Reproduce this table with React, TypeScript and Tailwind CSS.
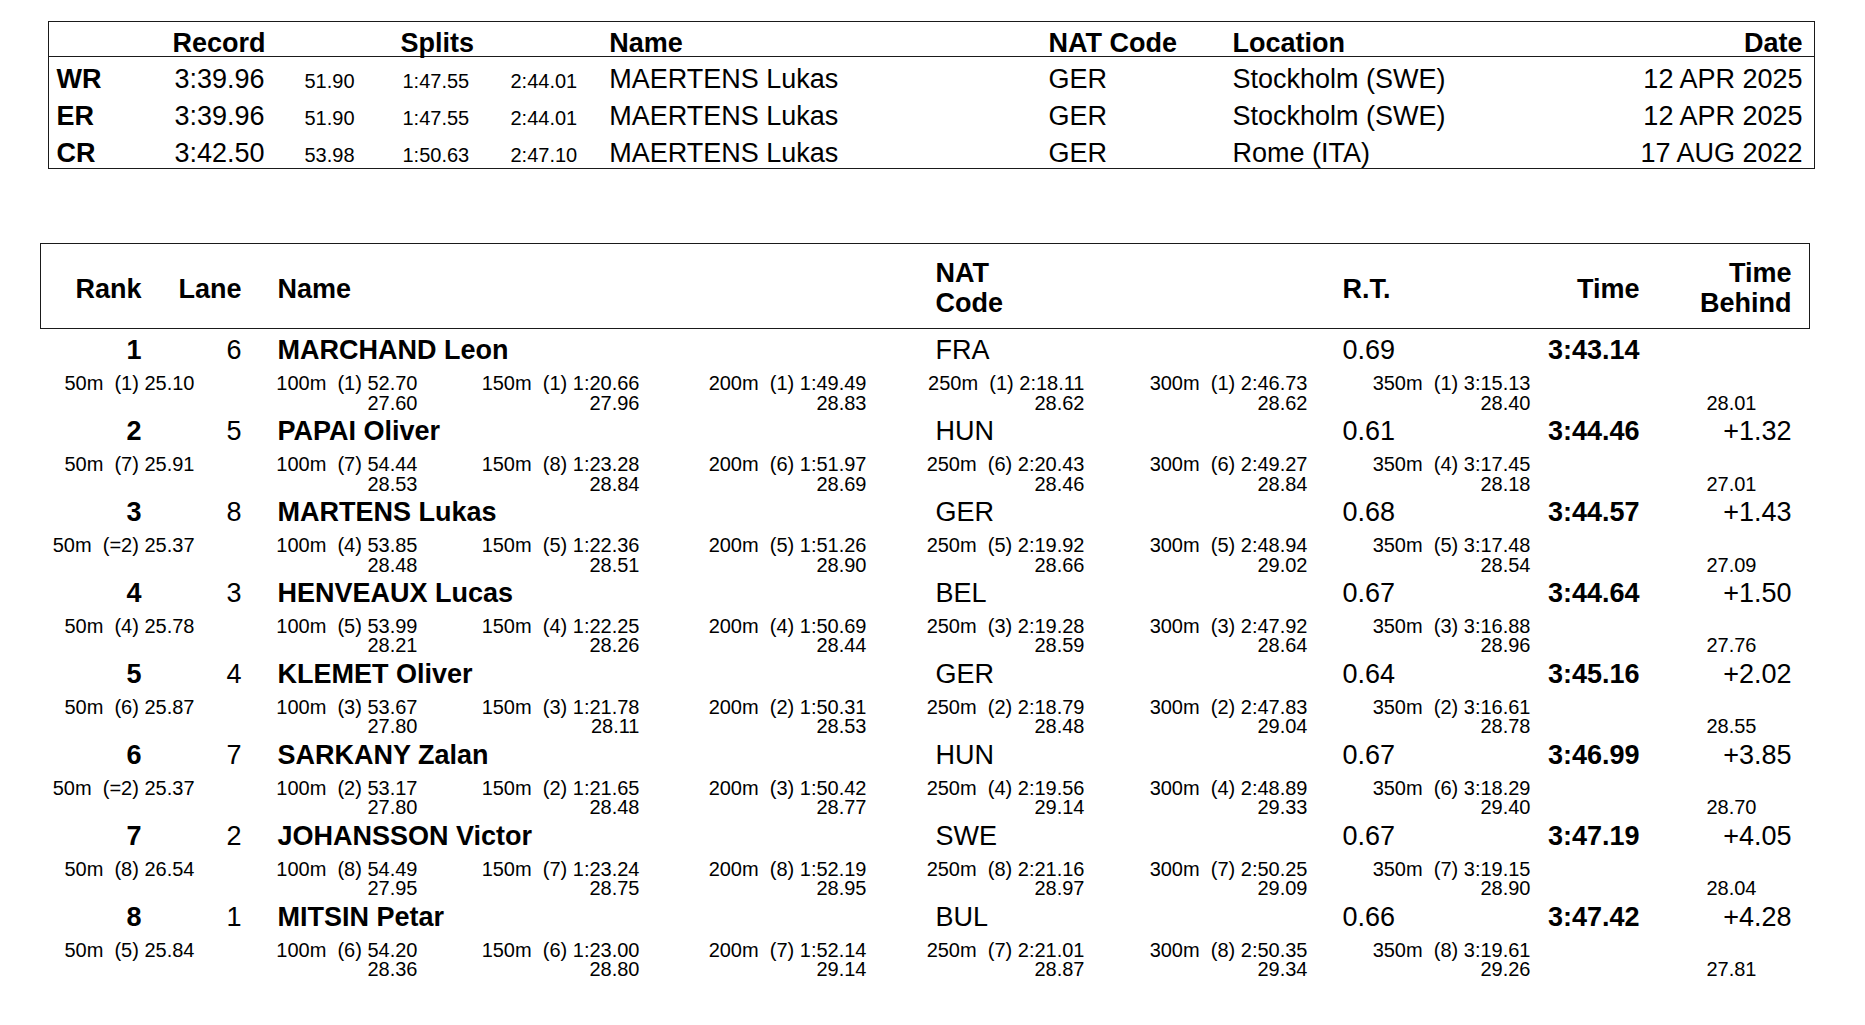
import React from "react";

type Rec = { code: string; time: string; s1: string; s2: string; s3: string; name: string; nat: string; loc: string; date: string };

const records: Rec[] = [
  { code: "WR", time: "3:39.96", s1: "51.90", s2: "1:47.55", s3: "2:44.01", name: "MAERTENS Lukas", nat: "GER", loc: "Stockholm (SWE)", date: "12 APR 2025" },
  { code: "ER", time: "3:39.96", s1: "51.90", s2: "1:47.55", s3: "2:44.01", name: "MAERTENS Lukas", nat: "GER", loc: "Stockholm (SWE)", date: "12 APR 2025" },
  { code: "CR", time: "3:42.50", s1: "53.98", s2: "1:50.63", s3: "2:47.10", name: "MAERTENS Lukas", nat: "GER", loc: "Rome (ITA)", date: "17 AUG 2022" },
];

type Split = [string, string];
type Row = {
  rank: string;
  lane: string;
  name: string;
  nat: string;
  rt: string;
  time: string;
  behind: string;
  splits: Split[];
  last: string;
};

const rows: Row[] = [
  {
    rank: "1", lane: "6", name: "MARCHAND Leon", nat: "FRA", rt: "0.69", time: "3:43.14", behind: "",
    splits: [["50m  (1) 25.10", ""], ["100m  (1) 52.70", "27.60"], ["150m  (1) 1:20.66", "27.96"], ["200m  (1) 1:49.49", "28.83"], ["250m  (1) 2:18.11", "28.62"], ["300m  (1) 2:46.73", "28.62"], ["350m  (1) 3:15.13", "28.40"]],
    last: "28.01",
  },
  {
    rank: "2", lane: "5", name: "PAPAI Oliver", nat: "HUN", rt: "0.61", time: "3:44.46", behind: "+1.32",
    splits: [["50m  (7) 25.91", ""], ["100m  (7) 54.44", "28.53"], ["150m  (8) 1:23.28", "28.84"], ["200m  (6) 1:51.97", "28.69"], ["250m  (6) 2:20.43", "28.46"], ["300m  (6) 2:49.27", "28.84"], ["350m  (4) 3:17.45", "28.18"]],
    last: "27.01",
  },
  {
    rank: "3", lane: "8", name: "MARTENS Lukas", nat: "GER", rt: "0.68", time: "3:44.57", behind: "+1.43",
    splits: [["50m  (=2) 25.37", ""], ["100m  (4) 53.85", "28.48"], ["150m  (5) 1:22.36", "28.51"], ["200m  (5) 1:51.26", "28.90"], ["250m  (5) 2:19.92", "28.66"], ["300m  (5) 2:48.94", "29.02"], ["350m  (5) 3:17.48", "28.54"]],
    last: "27.09",
  },
  {
    rank: "4", lane: "3", name: "HENVEAUX Lucas", nat: "BEL", rt: "0.67", time: "3:44.64", behind: "+1.50",
    splits: [["50m  (4) 25.78", ""], ["100m  (5) 53.99", "28.21"], ["150m  (4) 1:22.25", "28.26"], ["200m  (4) 1:50.69", "28.44"], ["250m  (3) 2:19.28", "28.59"], ["300m  (3) 2:47.92", "28.64"], ["350m  (3) 3:16.88", "28.96"]],
    last: "27.76",
  },
  {
    rank: "5", lane: "4", name: "KLEMET Oliver", nat: "GER", rt: "0.64", time: "3:45.16", behind: "+2.02",
    splits: [["50m  (6) 25.87", ""], ["100m  (3) 53.67", "27.80"], ["150m  (3) 1:21.78", "28.11"], ["200m  (2) 1:50.31", "28.53"], ["250m  (2) 2:18.79", "28.48"], ["300m  (2) 2:47.83", "29.04"], ["350m  (2) 3:16.61", "28.78"]],
    last: "28.55",
  },
  {
    rank: "6", lane: "7", name: "SARKANY Zalan", nat: "HUN", rt: "0.67", time: "3:46.99", behind: "+3.85",
    splits: [["50m  (=2) 25.37", ""], ["100m  (2) 53.17", "27.80"], ["150m  (2) 1:21.65", "28.48"], ["200m  (3) 1:50.42", "28.77"], ["250m  (4) 2:19.56", "29.14"], ["300m  (4) 2:48.89", "29.33"], ["350m  (6) 3:18.29", "29.40"]],
    last: "28.70",
  },
  {
    rank: "7", lane: "2", name: "JOHANSSON Victor", nat: "SWE", rt: "0.67", time: "3:47.19", behind: "+4.05",
    splits: [["50m  (8) 26.54", ""], ["100m  (8) 54.49", "27.95"], ["150m  (7) 1:23.24", "28.75"], ["200m  (8) 1:52.19", "28.95"], ["250m  (8) 2:21.16", "28.97"], ["300m  (7) 2:50.25", "29.09"], ["350m  (7) 3:19.15", "28.90"]],
    last: "28.04",
  },
  {
    rank: "8", lane: "1", name: "MITSIN Petar", nat: "BUL", rt: "0.66", time: "3:47.42", behind: "+4.28",
    splits: [["50m  (5) 25.84", ""], ["100m  (6) 54.20", "28.36"], ["150m  (6) 1:23.00", "28.80"], ["200m  (7) 1:52.14", "29.14"], ["250m  (7) 2:21.01", "28.87"], ["300m  (8) 2:50.35", "29.34"], ["350m  (8) 3:19.61", "29.26"]],
    last: "27.81",
  },
];

const topCols = "grid grid-cols-[116px_131px_97px_108px_100.7px_439.3px_184px_1fr_auto] items-baseline pl-[7.5px] pr-[11.5px]";
const mainCols = "grid grid-cols-[100.5px_100px_694px_407px_157px_140px_152px]";
const splitCols = "grid grid-cols-[153.5px_223px_222px_227px_218px_223px_223px_226px]";

export default function App() {
  return (
    <div className="w-[1865px] h-[1025px] overflow-hidden bg-white text-black font-['Liberation_Sans',Arial,Helvetica,sans-serif] pt-[21px]">
      {/* Records table */}
      <div className="ml-[48px] w-[1767px] border-[1.5px] border-[#1a1a1a]">
        <div className="h-[35.3px] pt-[5.6px] border-b-[1.5px] border-[#1a1a1a]">
          <div className={`${topCols} leading-[31.5px] text-[27px] font-bold`}>
            <div></div>
            <div>Record</div>
            <div></div>
            <div>Splits</div>
            <div></div>
            <div>Name</div>
            <div>NAT Code</div>
            <div>Location</div>
            <div className="text-right">Date</div>
          </div>
        </div>
        {records.map((r) => (
          <div key={r.code} className="h-[37px] pt-[5.6px]">
            <div className={`${topCols} leading-[32.7px] text-[27px]`}>
              <div className="font-bold">{r.code}</div>
              <div className="pl-[2px]">{r.time}</div>
              <div className="pl-[1px] text-[20px]">{r.s1}</div>
              <div className="pl-[2px] text-[20px]">{r.s2}</div>
              <div className="pl-[2px] text-[20px]">{r.s3}</div>
              <div>{r.name}</div>
              <div>{r.nat}</div>
              <div>{r.loc}</div>
              <div className="text-right">{r.date}</div>
            </div>
          </div>
        ))}
      </div>

      {/* Results table */}
      <div className="ml-[40px] w-[1770px] mt-[74px]">
        <div className="border-[1.5px] border-[#1a1a1a]">
          <div className={`${mainCols} h-[83.6px] pt-[6.8px] items-center text-[27px] leading-[30px] font-bold`}>
            <div className="text-right">Rank</div>
            <div className="text-right">Lane</div>
            <div className="pl-[36px]">Name</div>
            <div className="mb-[2.4px]">
              NAT
              <br />
              Code
            </div>
            <div>R.T.</div>
            <div className="text-right">Time</div>
            <div className="text-right mb-[2.4px]">
              Time
              <br />
              Behind
            </div>
          </div>
        </div>

        <div className="border-x-[1.5px] border-transparent">
          {rows.map((r) => (
            <div key={r.rank}>
              <div className="h-[39px] pt-[2.4px]">
                <div className={`${mainCols} leading-[39px] text-[27px]`}>
                  <div className="text-right font-bold">{r.rank}</div>
                  <div className="text-right">{r.lane}</div>
                  <div className="pl-[36px] font-bold whitespace-nowrap">{r.name}</div>
                  <div>{r.nat}</div>
                  <div>{r.rt}</div>
                  <div className="text-right font-bold">{r.time}</div>
                  <div className="text-right">{r.behind}</div>
                </div>
              </div>
              <div className={`${splitCols} mt-[6.15px] h-[35.85px] text-[20px] leading-[19px]`}>
                {r.splits.map((s, i) => (
                  <div key={i} className="text-right">
                    <div className="h-[19px] whitespace-pre">{s[0]}</div>
                    <div className="h-[19.5px] pt-[0.5px] whitespace-pre">{s[1]}</div>
                  </div>
                ))}
                <div className="text-right">
                  <div className="h-[19px]"></div>
                  <div className="h-[19.5px] pt-[0.5px]">{r.last}</div>
                </div>
              </div>
            </div>
          ))}
        </div>
      </div>
    </div>
  );
}
